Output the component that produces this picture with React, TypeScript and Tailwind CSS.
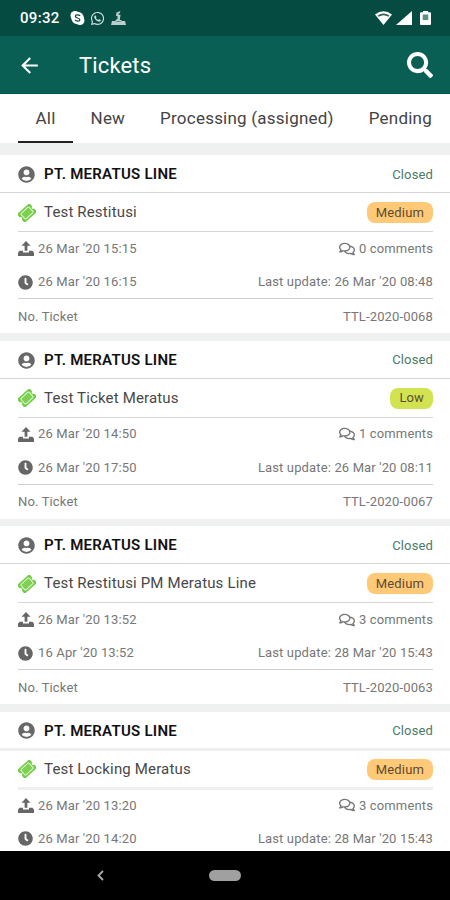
import { FaClock, FaRegComments, FaSearch, FaUserCircle, FaWhatsapp } from 'react-icons/fa'
import { MdArrowBack } from 'react-icons/md'

type Priority = 'Medium' | 'Low'

interface Ticket {
  id?: string
  title: string
  priority: Priority
  opened: string
  due: string
  comments: number
  updated: string
}

const TABS = ['All', 'New', 'Processing (assigned)', 'Pending']

const TICKETS: Ticket[] = [
  { id: 'TTL-2020-0068', title: 'Test Restitusi', priority: 'Medium', opened: "26 Mar '20 15:15", due: "26 Mar '20 16:15", comments: 0, updated: "26 Mar '20 08:48" },
  { id: 'TTL-2020-0067', title: 'Test Ticket Meratus', priority: 'Low', opened: "26 Mar '20 14:50", due: "26 Mar '20 17:50", comments: 1, updated: "26 Mar '20 08:11" },
  { id: 'TTL-2020-0063', title: 'Test Restitusi PM Meratus Line', priority: 'Medium', opened: "26 Mar '20 13:52", due: "16 Apr '20 13:52", comments: 3, updated: "28 Mar '20 15:43" },
  { title: 'Test Locking Meratus', priority: 'Medium', opened: "26 Mar '20 13:20", due: "26 Mar '20 14:20", comments: 3, updated: "28 Mar '20 15:43" },
]

const PRIORITY_STYLE: Record<Priority, string> = {
  Medium: 'bg-[#ffc978]',
  Low: 'bg-[#d2e352]',
}

function UploadIcon() {
  return (
    <svg width="16" height="15" viewBox="0 0 16 15" fill="currentColor">
      <path d="M8 0 12.500 4.800H9.400V9.800H6.600V4.800H3.500z" />
      <path d="M1.500 9.800h3.500v1.600h6V9.800h3.500L16 11.800V15H0v-3.200z" />
    </svg>
  )
}

function TicketIcon() {
  return (
    <svg width="18" height="18" viewBox="0 0 18 18" className="mr-2">
      <g transform="rotate(-42 9 9)">
        <path
          d="M2 3.200h14q1.300 0 1.300 1.300v3.100a1.400 1.400 0 0 0 0 2.800v3.100q0 1.300-1.300 1.300H2q-1.300 0-1.300-1.300v-3.100a1.400 1.400 0 0 0 0-2.800V4.500q0-1.300 1.300-1.300z"
          fill="#72cb45"
        />
        <rect x="3.500" y="5.300" width="11" height="7.400" rx="1" fill="#7dd052" stroke="#e2f6d6" strokeWidth="1" />
      </g>
    </svg>
  )
}

function StatusBar() {
  return (
    <div className="flex h-9 shrink-0 items-center justify-between bg-[#064b42] pl-5 pr-[18px] text-white">
      <div className="flex items-center">
        <span className="w-[50px] text-[15px] font-medium tracking-[0.300px]">09:32</span>
        <svg width="15" height="14" viewBox="0 0 15 14">
          <circle cx="5" cy="4.500" r="4.500" fill="#fff" />
          <circle cx="10" cy="9.500" r="4.500" fill="#fff" />
          <circle cx="7.500" cy="7" r="6.200" fill="#fff" />
          <path d="M10 4.900C9 3.500 5.200 3.500 5.300 5.400S9.900 6.800 9.900 8.700 6 10.400 5 8.900" fill="none" stroke="#064b42" strokeWidth="1.200" />
        </svg>
        <FaWhatsapp size={15} className="ml-[5px] text-[#d5e3e0]" />
        <svg width="15" height="14" viewBox="0 0 15 14" className="ml-[6px] text-[#b9cfcb]" fill="currentColor">
          <path d="M5.500 1.500 9.500 0 8.500 2.500h-1v1.200h2L8.800 9h1.700v1.500H4.500V9L6.500 8V5H5z" />
          <path d="M1 10h3.500L6 11h3l1.500-1H14L15 14H0z" />
        </svg>
      </div>
      <div className="flex items-center">
        <svg width="17" height="14" viewBox="0 0 17 14">
          <path d="M0 3.600Q8.500-3 17 3.600L8.500 14z" fill="#fff" />
          <path d="M2.600 4.600Q8.500.5 14.400 4.600l-1 1.200Q8.500 2.600 3.600 5.800z" fill="#385d56" />
        </svg>
        <svg width="16" height="14" viewBox="0 0 16 14" className="ml-1">
          <path d="M16 0v14H0z" fill="#fff" />
        </svg>
        <svg width="11" height="14" viewBox="0 0 11 14" className="ml-2 mr-px">
          <path d="M3 0h5v1.200h2q1 0 1 1V13q0 1-1 1H1q-1 0-1-1V2.200q0-1 1-1h2z" fill="#fff" />
          <path d="M2.700 3.500h5.600v5.500H2.700z" fill="#5a9187" />
        </svg>
      </div>
    </div>
  )
}

function TicketCard({ ticket, thick }: { ticket: Ticket; thick: boolean }) {
  const line = thick ? 'border-b-[3px] border-[#eeefef]' : 'border-b border-[#d4d5d5]'

  return (
    <article className="mb-[7.600px] h-[178px] shrink-0 bg-white text-[13px] tracking-[0.140px] text-[#777]">
      <div className={`flex items-center pl-[18px] pr-[17px] ${thick ? 'h-[39px] pt-[2px]' : 'h-[38px] pt-[2px]'} ${line}`}>
        <FaUserCircle size={17} className="mr-[9px] text-[#686868]" />
        <span className="flex-1 text-[15px] font-semibold tracking-[0.270px] text-[#111]">PT. MERATUS LINE</span>
        <span className="text-[#4b7b6b]">Closed</span>
      </div>
      <div className="pl-[18px] pr-[17px]">
        <div className={`flex h-[39px] items-center pt-px ${thick ? '-mb-px' : ''} ${line}`}>
          <TicketIcon />
          <span className="flex-1 text-[15px] tracking-[0.160px] text-[#484848]">{ticket.title}</span>
          <span className={`flex h-[21px] items-center rounded-[8px] px-[9px] text-[#5c4b32] ${PRIORITY_STYLE[ticket.priority]}`}>
            {ticket.priority}
          </span>
        </div>
        <div className="h-[67px] border-b border-[#cfcfcf]">
          <div className="flex h-[33px] items-center">
            <span className="mr-1 text-[#666]"><UploadIcon /></span>
            <span className="flex-1">{ticket.opened}</span>
            <FaRegComments size={16} className="mr-1" />
            <span>{ticket.comments} comments</span>
          </div>
          <div className="flex h-[34px] items-center">
            <FaClock size={15} className="mr-[5px] text-[#666]" />
            <span className="flex-1">{ticket.due}</span>
            <span>Last update: {ticket.updated}</span>
          </div>
        </div>
        {ticket.id && (
          <div className="flex h-[35px] items-center justify-between">
            <span>No. Ticket</span>
            <span>{ticket.id}</span>
          </div>
        )}
      </div>
    </article>
  )
}

function App() {
  return (
    <div className="flex h-[900px] w-[450px] flex-col overflow-hidden bg-[#eff1f1] font-['Roboto',sans-serif]">
      <StatusBar />

      <header className="flex h-[58px] shrink-0 items-center border-b border-[#07584e] bg-[#0a5f55] px-[17px] pt-px text-white">
        <MdArrowBack size={25} />
        <h1 className="ml-[37px] flex-1 text-[22px] tracking-[0.150px]">Tickets</h1>
        <FaSearch size={26} />
      </header>

      <nav className="flex h-[49px] shrink-0 bg-white pl-[18px] text-[17px] tracking-[0.220px] text-[#444]">
        {TABS.map((tab, i) => (
          <button
            key={tab}
            className={`shrink-0 px-[17.500px] pt-[3px] ${i === 0 ? 'border-b-2 border-[#222]' : 'border-b-2 border-transparent'}`}
          >
            {tab}
          </button>
        ))}
      </nav>

      <main className="flex min-h-0 flex-1 flex-col overflow-hidden pt-3">
        {TICKETS.map((ticket, i) => (
          <TicketCard key={ticket.title} ticket={ticket} thick={i === 3} />
        ))}
      </main>

      <footer className="grid h-[49px] shrink-0 grid-cols-[1fr_32px_1fr] items-center bg-black">
        <svg width="7" height="11" viewBox="0 0 7 11" className="ml-[97px]" fill="none" stroke="#aaa" strokeWidth="1.800">
          <path d="M6 1 1.500 5.500 6 10" />
        </svg>
        <div className="h-[11px] rounded-full bg-[#a0a0a0]" />
      </footer>
    </div>
  )
}

export default App
